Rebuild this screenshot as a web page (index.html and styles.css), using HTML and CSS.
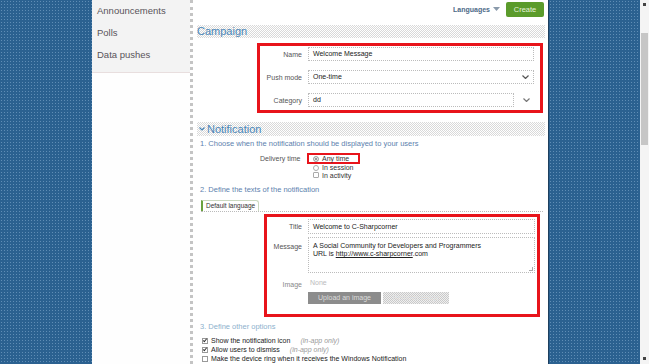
FILE: index.html
```html
<!DOCTYPE html>
<html lang="en">
<head>
    <meta charset="UTF-8">
    <meta name="viewport" content="width=device-width, initial-scale=1.0">
    <title>Push campaign</title>
    <link rel="stylesheet" href="styles.css">
</head>
<body>
    <div class="page">
        <div class="blue"></div>

        <div class="sidebar">
            <a class="nav-item">Announcements</a>
            <a class="nav-item">Polls</a>
            <a class="nav-item">Data pushes</a>
            <div class="nav-sep"></div>
        </div>

        <div class="main">
            <div class="topbar">
                <span class="languages">Languages <svg width="7" height="4" viewBox="0 0 7 4"><path d="M0 0h7L3.5 4z" fill="#8a9aab"/></svg></span>
                <button class="btn-create">Create</button>
            </div>

            <h2 class="band">Campaign</h2>
            <div class="redbox box-campaign">
                <div class="field">
                    <label>Name</label>
                    <div class="input">Welcome Message</div>
                </div>
                <div class="field">
                    <label>Push mode</label>
                    <div class="input select">One-time
                        <svg class="chev" width="7" height="4" viewBox="0 0 7 4"><path d="M0.5 0.5l3 3 3-3" fill="none" stroke="#555" stroke-width="1.2"/></svg>
                    </div>
                </div>
                <div class="field">
                    <label>Category</label>
                    <div class="combo">
                        <div class="input short">dd</div>
                        <svg class="chev" width="7" height="4" viewBox="0 0 7 4"><path d="M0.5 0.5l3 3 3-3" fill="none" stroke="#777" stroke-width="1.2"/></svg>
                    </div>
                </div>
            </div>

            <h2 class="band band-notif"><svg width="6" height="4" viewBox="0 0 6 4"><path d="M0.5 0.5l2.5 2.5 2.5-2.5" fill="none" stroke="#4a86b8" stroke-width="1.2"/></svg>Notification</h2>
            <p class="step">1. Choose when the notification should be displayed to your users</p>
            <div class="delivery">
                <label>Delivery time</label>
                <div class="options">
                    <div class="redbox box-radio"><span class="radio on"></span>Any time</div>
                    <div class="opt"><span class="radio"></span>In session</div>
                    <div class="opt"><span class="radio sq"></span>In activity</div>
                </div>
            </div>

            <p class="step step-2">2. Define the texts of the notification</p>
            <div class="tabs">
                <span class="tab">Default language</span>
            </div>
            <div class="redbox box-texts">
                <div class="field">
                    <label>Title</label>
                    <div class="input">Welcome to C-Sharpcorner</div>
                </div>
                <div class="field field-top">
                    <label>Message</label>
                    <div class="input textarea">A Social Community for Developers and Programmers<br>URL is <u>http://www.c-sharpcorner</u>.com
                        <span class="grip"></span>
                    </div>
                </div>
                <div class="field field-image">
                    <label>Image</label>
                    <div class="image-col">
                        <span class="none">None</span>
                        <div class="img-buttons">
                            <span class="btn-upload">Upload an image</span>
                            <span class="btn-remove">Remove image</span>
                        </div>
                    </div>
                </div>
            </div>

            <p class="step step-light">3. Define other options</p>
            <div class="checks">
                <div class="check"><span class="box on"></span>Show the notification icon <em>(in-app only)</em></div>
                <div class="check"><span class="box on"></span>Allow users to dismiss <em>(in-app only)</em></div>
                <div class="check"><span class="box"></span>Make the device ring when it receives the Windows Notification</div>
            </div>
            <div class="bottom-line"></div>
        </div>

        <div class="blue blue-right"></div>

        <div class="scrollbar">
            <span class="arrow"></span>
            <span class="thumb"></span>
            <span class="arrow arrow-down"></span>
        </div>
    </div>
</body>
</html>
```

FILE: styles.css
```css
html, body {
    margin: 0;
    height: 100%;
    overflow: hidden;
}
body {
    font-family: "Liberation Sans", Arial, sans-serif;
    color: #333;
    background-color: #fff;
}
.page {
    display: flex;
    width: 649px;
    height: 364px;
}
.blue {
    width: 92px;
    flex-shrink: 0;
    background-color: #2b6190;
    background-image: radial-gradient(#5f8db5 0.6px, transparent 0.9px);
    background-size: 3px 3px;
}
.blue-right {
    border-left: 1px solid #1d3f5e;
    width: 91px;
}

/* sidebar */
.sidebar {
    width: 98px;
    flex-shrink: 0;
    background-color: #fefefe;
    border-right: 3px dotted #c4c4c4;
}
.nav-item {
    display: block;
    height: 22px;
    line-height: 22px;
    padding-left: 5px;
    font-size: 9.5px;
    color: #59535a;
    background-color: #f3f3f3;
}
.nav-sep {
    height: 6px;
    background-color: #f3f3f3;
    border-bottom: 1px solid #e8dede;
}

/* main column */
.main {
    width: 348px;
    flex-shrink: 0;
    padding: 0 3px 0 4px;
    font-size: 7px;
}
.topbar {
    display: flex;
    justify-content: flex-end;
    align-items: center;
    gap: 6px;
    height: 18px;
    padding-right: 1px;
}
.languages {
    font-size: 7px;
    font-weight: bold;
    color: #4d6987;
    display: flex;
    align-items: center;
    gap: 3px;
}
.btn-create {
    width: 38px;
    height: 15px;
    padding: 0;
    border: none;
    border-radius: 2px;
    background-color: #5b9b2b;
    color: #e6f2da;
    font-family: inherit;
    font-size: 7.5px;
}
.band {
    margin: 7px 0 0;
    height: 13px;
    line-height: 13px;
    font-size: 11px;
    font-weight: normal;
    color: #4a86b8;
    background-image: repeating-conic-gradient(#d9d9d9 0 25%, #fff 0 50%);
    background-size: 2px 2px;
}
.band-notif {
    margin-top: 9px;
    height: 14px;
    line-height: 14px;
    display: flex;
    align-items: center;
    gap: 2px;
    padding-left: 2px;
}
.redbox {
    border: 3px solid #e8141b;
}
.box-campaign {
    margin: 5px 2px 0 60px;
    padding: 1px 6px 3px 0;
    display: flex;
    flex-direction: column;
    gap: 9px;
}
.field {
    display: flex;
    align-items: center;
    gap: 6px;
}
.field label {
    width: 42px;
    text-align: right;
    color: #555;
    flex-shrink: 0;
}
.input {
    flex: 1;
    height: 12px;
    line-height: 12px;
    padding: 0 4px;
    border: 1px dotted #bcbcbc;
    color: #222;
    position: relative;
}
.chev {
    position: absolute;
    right: 4px;
    top: 4px;
}
.combo {
    flex: 1;
    display: flex;
    align-items: center;
    position: relative;
}
.input.short {
    margin-right: 20px;
}
.combo .chev {
    top: 5px;
    right: 4px;
}

.step {
    margin: 3px 0 0 3px;
    font-size: 7.5px;
    line-height: 9px;
    color: #5c7fae;
}
.step-2 {
    margin-top: 6px;
}
.step-light {
    color: #8db1cd;
    margin-top: 5px;
}
.delivery {
    display: flex;
    margin: 5px 0 0 63px;
    gap: 5px;
}
.delivery label {
    width: 42px;
    line-height: 11px;
    color: #555;
}
.options {
    line-height: 7.5px;
    color: #333;
}
.box-radio {
    border-width: 2px;
    width: 45px;
    height: 7px;
    line-height: 7px;
    padding-left: 4px;
    display: flex;
    align-items: center;
}
.opt {
    display: flex;
    align-items: center;
    padding-left: 6px;
}
.radio {
    width: 4px;
    height: 4px;
    border: 1px solid #aaa;
    border-radius: 50%;
    margin-right: 3px;
    background-color: #fff;
}
.radio.on {
    background-color: #777;
    box-shadow: inset 0 0 0 1px #fff;
}
.radio.sq {
    border-radius: 1px;
}
.tabs {
    margin: 6px 2px 0 4px;
    height: 11px;
    border-bottom: 1px dotted #bbb;
    display: flex;
}
.tab {
    padding: 0 3px;
    line-height: 10px;
    height: 10px;
    border: 1px solid #cbd9c0;
    border-left: 2px solid #6aa23e;
    border-bottom: none;
    border-radius: 0 3px 0 0;
    background-color: #fff;
    font-size: 6.5px;
    color: #333;
}
.box-texts {
    margin: 2px 5px 0 67px;
    padding: 2px 2px 10px 0;
    display: flex;
    flex-direction: column;
    gap: 3px;
}
.box-texts .field label {
    width: 35px;
}
.box-texts .input {
    height: 13px;
    line-height: 13px;
}
.field-top {
    align-items: flex-start;
}
.field-top label {
    margin-top: 6px;
}
.input.textarea {
    height: 30px;
    line-height: 8px;
    padding-top: 4px;
}
.grip {
    position: absolute;
    right: 1px;
    bottom: 1px;
    width: 3px;
    height: 3px;
    border-right: 1px solid #aaa;
    border-bottom: 1px solid #aaa;
}
.field-image {
    align-items: flex-start;
    margin-top: 1px;
}
.field-image label {
    margin-top: 4px;
    color: #888;
}
.image-col {
    display: flex;
    flex-direction: column;
    gap: 4px;
}
.none {
    line-height: 10px;
    padding-left: 2px;
    margin-top: 1px;
    color: #bbb;
}
.img-buttons {
    display: flex;
    gap: 2px;
}
.btn-upload,
.btn-remove {
    height: 12px;
    line-height: 12px;
    padding: 0 6px;
    text-align: center;
}
.btn-upload {
    width: 61px;
    background-color: #8c8c8c;
    color: #dcdcdc;
}
.btn-remove {
    width: 54px;
    background-image: repeating-conic-gradient(#c9c9c9 0 25%, #efefef 0 50%);
    background-size: 2px 2px;
    color: #e2e2e2;
}
.checks {
    margin: 5px 0 0 5px;
    line-height: 9px;
    color: #222;
}
.check {
    display: flex;
    align-items: center;
}
.check em {
    color: #9a9a9a;
    margin-left: 10px;
}
.box {
    width: 4px;
    height: 4px;
    border: 1px solid #999;
    margin-right: 3px;
    position: relative;
}
.box.on::after {
    content: "";
    position: absolute;
    left: 1px;
    top: -1px;
    width: 1px;
    height: 3px;
    border: solid #333;
    border-width: 0 1px 1px 0;
    transform: rotate(40deg);
}
.bottom-line {
    margin-top: 1px;
    border-top: 1px dotted #bbb;
}

/* scrollbar */
.scrollbar {
    width: 9px;
    flex-shrink: 0;
    background-color: #f4f4f4;
    display: flex;
    flex-direction: column;
    align-items: center;
}
.arrow {
    margin-top: 3px;
    width: 3px;
    height: 3px;
    background-color: #444;
}
.thumb {
    margin-top: 27px;
    width: 7px;
    height: 112px;
    background-color: #c6c6c6;
}
.arrow-down {
    margin-top: auto;
    margin-bottom: 4px;
}
```
